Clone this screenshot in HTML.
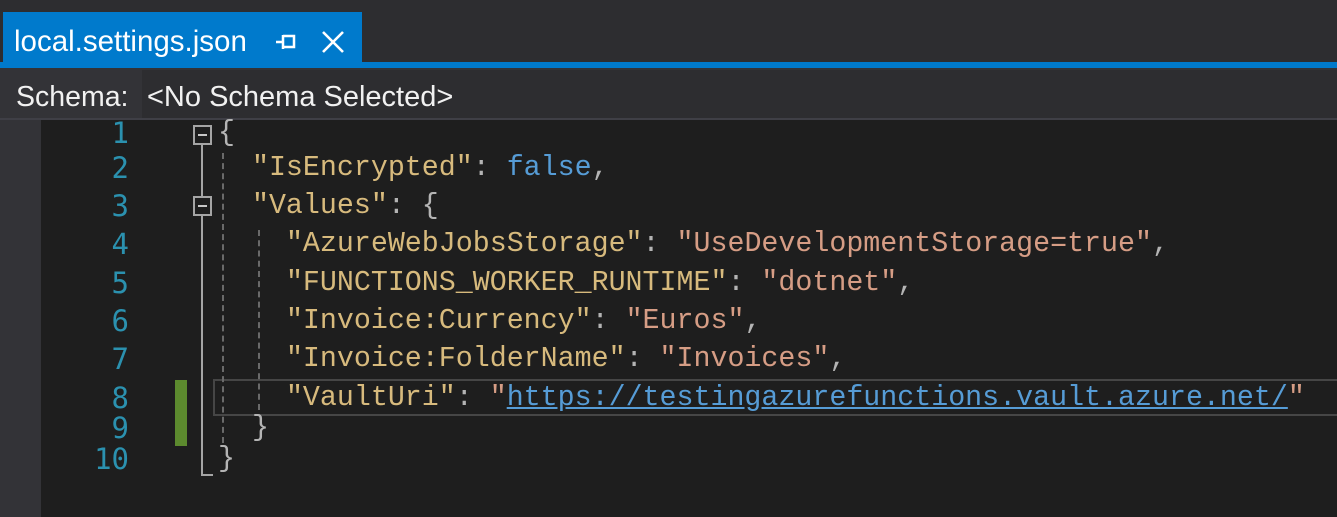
<!DOCTYPE html>
<html><head><style>
body{margin:0;width:1337px;height:517px;background:#1e1e1e;position:relative;overflow:hidden;font-family:"Liberation Mono",monospace}
.a{position:absolute}
.ln{position:absolute;left:0;width:129px;text-align:right;color:#2b91af;font-size:29px;height:38px;line-height:38px;font-family:"DejaVu Sans Mono",monospace}
.cl{position:absolute;left:218px;white-space:pre;font-size:28.3px;height:38px;line-height:38px;color:#b4b4b4}
.k{color:#d7ba7d}.s{color:#d69d85}.b{color:#569cd6}.u{color:#569cd6;text-decoration:underline}
.box{position:absolute;left:193px;width:15px;height:16px;border:2px solid #a5a5a5;background:#1e1e1e}
.box:after{content:"";position:absolute;left:3px;top:7px;width:9px;height:2px;background:#c8c8c8}
.dash{position:absolute;width:0;border-left:2px dashed #6a6a6a}
</style></head><body>
<div class="a" style="left:0;top:0;width:1337px;height:62px;background:#2d2d30"></div>
<div class="a" style="left:3px;top:12px;width:359px;height:56px;background:#007acc"></div>
<div class="a" style="left:0;top:62px;width:1337px;height:6px;background:#007acc"></div>
<div class="a" style="left:14px;top:22px;color:#fff;font-family:'Liberation Sans',sans-serif;font-size:29.5px;line-height:40px">local.settings.json</div>
<svg class="a" style="left:274px;top:30px" width="24" height="24" viewBox="0 0 24 24"><path d="M2 12h7M9 5v14M9 6h11v11H9" stroke="#fff" stroke-width="2.5" fill="none"/></svg>
<svg class="a" style="left:320px;top:29px" width="26" height="26" viewBox="0 0 26 26"><path d="M3 3L23 23M23 3L3 23" stroke="#fff" stroke-width="2.6"/></svg>
<div class="a" style="left:0;top:68px;width:1337px;height:50px;background:#333337"></div>
<div class="a" style="left:142px;top:70px;width:1195px;height:48px;background:#2d2d30"></div>
<div class="a" style="left:0;top:118px;width:1337px;height:2px;background:#3f3f46"></div>
<div class="a" style="left:16px;top:77px;color:#f1f1f1;font-family:'Liberation Sans',sans-serif;font-size:28.5px;line-height:40px">Schema:</div>
<div class="a" style="left:147px;top:77px;color:#f1f1f1;font-family:'Liberation Sans',sans-serif;font-size:29px;line-height:40px">&lt;No Schema Selected&gt;</div>
<div class="a" style="left:0;top:120px;width:41px;height:397px;background:#333337"></div>

<div class="a" style="left:213px;top:379px;width:1130px;height:33px;border:2px solid #464646"></div>
<div class="a" style="left:175px;top:380px;width:12px;height:66px;background:#5c8a2e"></div>

<div class="a" style="left:201px;top:144px;width:2px;height:52px;background:#a5a5a5"></div>
<div class="a" style="left:201px;top:216px;width:2px;height:260px;background:#a5a5a5"></div>
<div class="a" style="left:201px;top:474px;width:12px;height:2px;background:#a5a5a5"></div>
<div class="box" style="top:125px"></div>
<div class="box" style="top:196px"></div>
<div class="dash" style="left:222px;top:153px;height:290px"></div>
<div class="dash" style="left:258px;top:230px;height:180px"></div>

<div class="ln" style="top:114px">1</div>
<div class="ln" style="top:149px">2</div>
<div class="ln" style="top:187px">3</div>
<div class="ln" style="top:225px">4</div>
<div class="ln" style="top:264px">5</div>
<div class="ln" style="top:302px">6</div>
<div class="ln" style="top:340px">7</div>
<div class="ln" style="top:379px">8</div>
<div class="ln" style="top:409px">9</div>
<div class="ln" style="top:440px">10</div>

<div class="cl" style="top:114px">{</div>
<div class="cl" style="top:149px">  <span class="k">"IsEncrypted"</span>: <span class="b">false</span>,</div>
<div class="cl" style="top:187px">  <span class="k">"Values"</span>: {</div>
<div class="cl" style="top:225px">    <span class="k">"AzureWebJobsStorage"</span>: <span class="s">"UseDevelopmentStorage=true"</span>,</div>
<div class="cl" style="top:264px">    <span class="k">"FUNCTIONS_WORKER_RUNTIME"</span>: <span class="s">"dotnet"</span>,</div>
<div class="cl" style="top:302px">    <span class="k">"Invoice:Currency"</span>: <span class="s">"Euros"</span>,</div>
<div class="cl" style="top:340px">    <span class="k">"Invoice:FolderName"</span>: <span class="s">"Invoices"</span>,</div>
<div class="cl" style="top:379px">    <span class="k">"VaultUri"</span>: <span class="s">"</span><span class="u">https://testingazurefunctions.vault.azure.net/</span><span class="s">"</span></div>
<div class="cl" style="top:409px">  }</div>
<div class="cl" style="top:440px">}</div>
</body></html>
